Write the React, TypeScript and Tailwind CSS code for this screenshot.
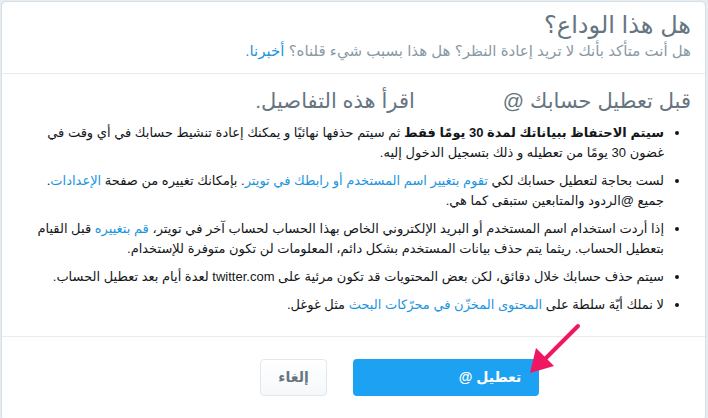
import React from 'react';

const Link = ({ children }: { children: React.ReactNode }) => (
  <span className="text-[#1b95e0]">{children}</span>
);

const items: React.ReactNode[] = [
  <>
    <b className="font-bold text-[#14171a]">سيتم الاحتفاظ ببياناتك لمدة 30 يومًا فقط</b> ثم سيتم حذفها نهائيًا و يمكنك إعادة تنشيط حسابك في أي وقت في غضون 30 يومًا من تعطيله و ذلك بتسجيل الدخول إليه.
  </>,
  <>
    لست بحاجة لتعطيل حسابك لكي <Link>تقوم بتغيير اسم المستخدم أو رابطك في تويتر</Link>. بإمكانك تغييره من صفحة <Link>الإعدادات</Link>. جميع @الردود والمتابعين ستبقى كما هي.
  </>,
  <>
    إذا أردت استخدام اسم المستخدم أو البريد الإلكتروني الخاص بهذا الحساب لحساب آخر في تويتر، <Link>قم بتغييره</Link> قبل القيام بتعطيل الحساب. ريثما يتم حذف بيانات المستخدم بشكل دائم، المعلومات لن تكون متوفرة للإستخدام.
  </>,
  <>سيتم حذف حسابك خلال دقائق، لكن بعض المحتويات قد تكون مرئية على twitter.com لعدة أيام بعد تعطيل الحساب.</>,
  <>
    لا نملك أيّة سلطة على <Link>المحتوى المخزّن في محرّكات البحث</Link> مثل غوغل.
  </>,
];

export default function App() {
  return (
    <div
      dir="rtl"
      className="relative h-[418px] w-[708px] overflow-hidden bg-[#e6ecf0] pt-px pr-[2px] pl-px"
      style={{ fontFamily: '"Liberation Sans", "DejaVu Sans", sans-serif' }}
    >
      <div className="h-[420px] rounded-[5px] border border-[#d6dfe6] bg-white">
        <div className="h-[72px] border-b border-[#e6ecf0] px-[14px] pt-[9px]">
          <h1 className="text-[24px] leading-[28px] text-[#66757f]">هل هذا الوداع؟</h1>
          <p className="mt-[3px] text-[15px] leading-[17px] text-[#8899a6]">
            هل أنت متأكد بأنك لا تريد إعادة النظر؟ هل هذا بسبب شيء قلناه؟ <Link>أخبرنا.</Link>
          </p>
        </div>

        <div className="border-b border-[#e6ecf0] px-[14px] pt-[14px] pb-[21px]">
          <h2 className="h-[26px] text-[21px] leading-[26px] text-[#66757f]">
            قبل تعطيل حسابك @<span className="inline-block w-[88px]"></span>اقرأ هذه التفاصيل.
          </h2>
          <ul className="mt-[9px] flex list-disc flex-col gap-[8px] pr-[27px] pl-[5px] text-[13px] leading-[20px] text-[#14171a]">
            {items.map((it, i) => (
              <li key={i} className="marker:text-[#14171a]">
                {it}
              </li>
            ))}
          </ul>
        </div>

        <div className="flex items-center gap-[26px] pt-[22px] pr-[166px]">
          <button className="h-[37px] w-[186px] rounded-[4px] bg-[#1da1f2] text-[14px] font-bold text-white">
            تعطيل @<span className="inline-block w-[88px]"></span>
          </button>
          <button className="h-[37px] w-[67px] rounded-[4px] border border-[#e1e8ed] bg-gradient-to-b from-white to-[#f5f8fa] text-[14px] font-bold text-[#66757f]">
            إلغاء
          </button>
        </div>
      </div>

      <svg className="absolute top-[320px] left-[526px]" width="60" height="60" viewBox="0 0 60 60">
        <line x1="52" y1="6" x2="16" y2="42" stroke="#ef1761" strokeWidth="4" strokeLinecap="round" />
        <polygon points="4,53 10,28 28,46" fill="#ef1761" />
      </svg>
    </div>
  );
}
